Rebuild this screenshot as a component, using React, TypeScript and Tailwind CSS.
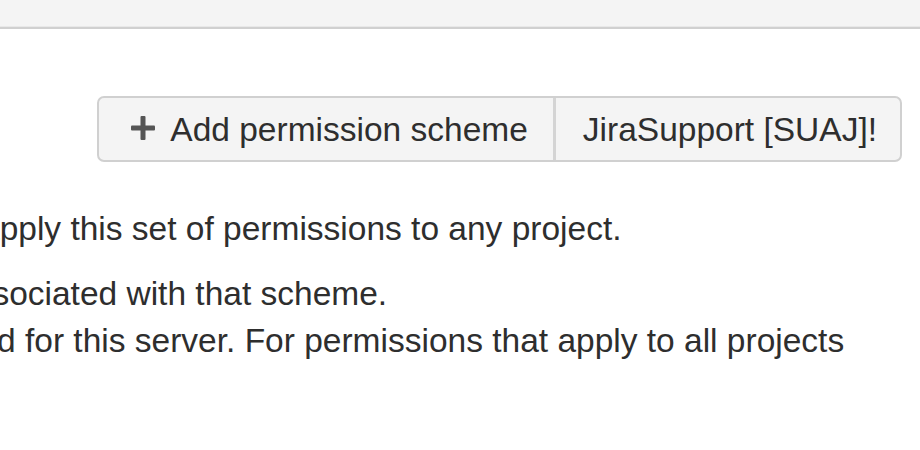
import React from "react";

export default function App() {
  return (
    <div
      className="w-[920px] h-[450px] overflow-hidden bg-white text-[#2e2e2e]"
      style={{ fontFamily: '"Liberation Sans", Arial, sans-serif' }}
    >
      <div className="h-[26px] bg-[#f4f4f4]" />
      <div className="h-px bg-[#e8e8e8]" />
      <div className="h-[2px] bg-[#d0d0d0]" />

      <div className="flex justify-end pr-[18px] mt-[67px]">
        <div className="flex h-[66px] rounded-[7px] border-2 border-[#d0d0d0] bg-[#f4f4f4] text-[33.5px] leading-[47px]">
          <div className="flex items-center pl-[31px] pr-[25px] border-r-[3px] border-[#d4d4d4]">
            <svg width="26" height="26" viewBox="0 0 26 26" className="mr-[14px] mt-[-2px]">
              <rect x="10.5" y="1" width="5" height="24" rx="1" fill="#555555" />
              <rect x="1" y="10.5" width="24" height="5" rx="1" fill="#555555" />
            </svg>
            <span>Add permission scheme</span>
          </div>
          <div className="flex items-center pl-[27px] pr-[23px]">
            <span>JiraSupport [SUAJ]!</span>
          </div>
        </div>
      </div>

      <div className="mt-[43px] text-[33.5px] leading-[47px] whitespace-nowrap">
        <p className="ml-[-19px]">apply this set of permissions to any project.</p>
        <p className="mt-[18px] ml-[-43px]">associated with that scheme.</p>
        <p className="ml-[-57px]">used for this server. For permissions that apply to all projects</p>
      </div>
    </div>
  );
}
